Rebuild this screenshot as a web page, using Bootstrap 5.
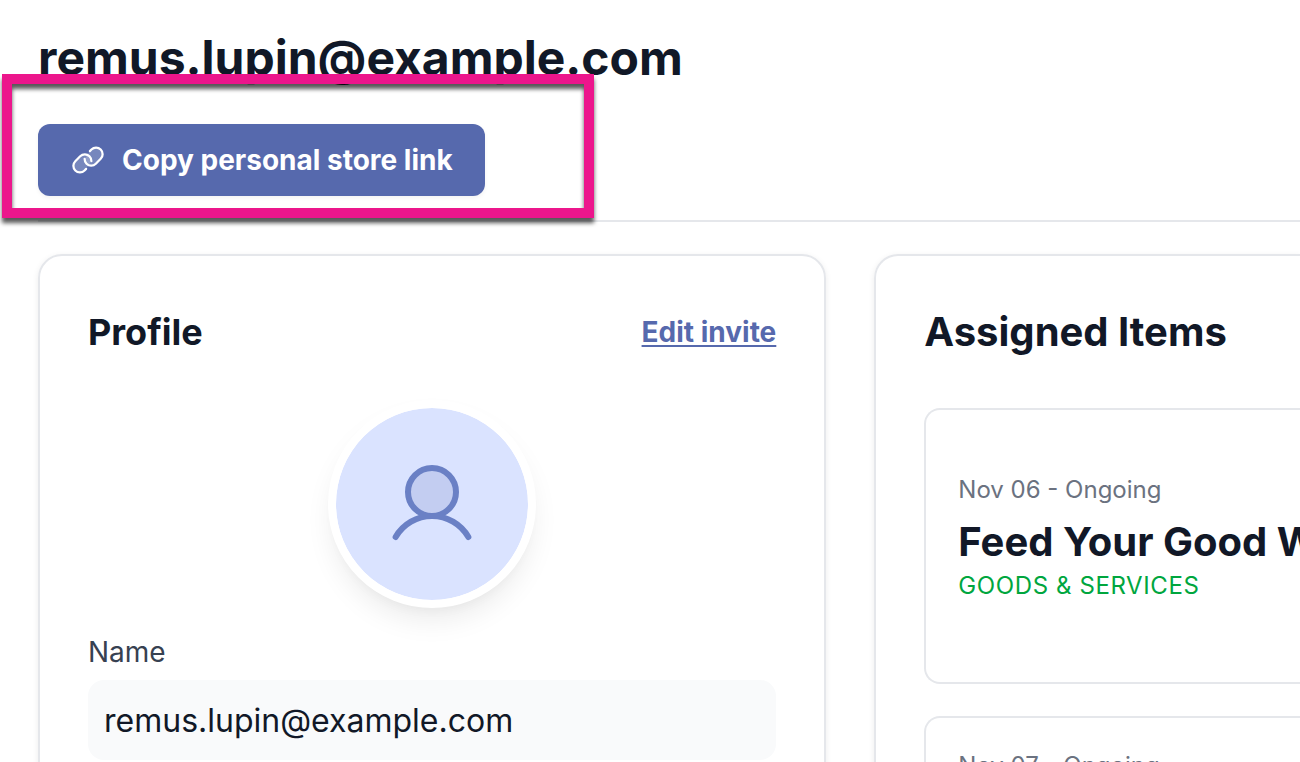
<!DOCTYPE html>
<html lang="en">
<head>
<meta charset="utf-8">
<meta name="viewport" content="width=device-width, initial-scale=1">
<title>remus.lupin@example.com</title>
<link href="https://cdn.jsdelivr.net/npm/bootstrap@5.3.0/dist/css/bootstrap.min.css" rel="stylesheet">
<style>
  :root { --ink: #111827; --brand: #5669ad; --line: #e5e7eb; }
  body { font-family: Inter, "Liberation Sans", sans-serif; color: var(--ink); background: #fff; }
  .page { padding: 28px 0 0 38px; }
  .page-head { padding-bottom: 24px; border-bottom: 2px solid var(--line); margin-bottom: 32px; }
  .page-title { font-size: 48px; line-height: 60px; margin-bottom: 36px; font-weight: 700; }
  .btn-brand {
    --bs-btn-color: #fff; --bs-btn-bg: var(--brand); --bs-btn-border-color: var(--brand);
    --bs-btn-hover-color: #fff; --bs-btn-hover-bg: #4a5b9b; --bs-btn-hover-border-color: #4a5b9b;
    --bs-btn-padding-x: 32px; --bs-btn-padding-y: 16px; --bs-btn-border-width: 0;
    --bs-btn-font-size: 28px; --bs-btn-line-height: 40px; --bs-btn-font-weight: 700; --bs-btn-border-radius: 12px;
    gap: 16px; box-shadow: 0 2px 4px rgba(0,0,0,.05);
  }
  /* callout frame drawn over the header */
  .callout { top: 46px; left: -36px; width: 592px; height: 144px; border: 10px solid #ec168c; filter: drop-shadow(0 5px 2px rgba(0,0,0,.65)); }
  .panels { display: grid; grid-template-columns: calc(65% - 32px) 1fr; gap: 48px; }
  .panel { min-width: 0; padding: 48px; border: 2px solid var(--line); border-radius: 24px; box-shadow: 0 2px 6px rgba(0,0,0,.08); }
  .panel-bleed { padding-right: 0; border-right: 0; border-radius: 24px 0 0 24px; }
  .panel-head { height: 56px; }
  .h-profile { font-size: 36px; line-height: 56px; font-weight: 700; }
  .h-items { font-size: 40px; line-height: 56px; font-weight: 700; }
  .edit-link { font-size: 28px; line-height: 40px; font-weight: 700; color: var(--brand); text-underline-offset: 3px; text-decoration-thickness: 2px; }
  .avatar { width: 208px; height: 208px; margin: 40px auto 24px; border: 8px solid #fff; background: #dae3ff; background-clip: padding-box; box-shadow: 0 16px 28px -4px rgba(0,0,0,.08), 0 8px 12px -6px rgba(0,0,0,.04); }
  .field-label { font-size: 28px; line-height: 40px; margin-bottom: 8px; color: #374151; }
  .field-box { height: 80px; padding: 16px; border: 0; border-radius: 16px; background: #f9fafb; font-size: 32px; line-height: 48px; color: var(--ink); }
  .item-list { margin-top: 48px; gap: 32px; }
  .item-card { padding: 32px; border: 2px solid var(--line); border-right: 0; border-radius: 16px 0 0 16px; white-space: nowrap; overflow: hidden; }
  .item-tall { padding-top: 64px; padding-bottom: 80px; }
  .item-date { font-size: 24px; line-height: 32px; color: #6b7280; margin-bottom: 8px; }
  .item-kind { font-size: 24px; line-height: 32px; color: #00a63e; letter-spacing: .025em; }
</style>
</head>
<body>
<div class="page vh-100 overflow-hidden">
  <header class="page-head position-relative">
    <h1 class="page-title">remus.lupin@example.com</h1>
    <button type="button" class="btn btn-brand d-inline-flex align-items-center">
      <svg width="36" height="36" viewBox="0 0 256 256" fill="currentColor" fill-opacity=".2" stroke="currentColor" stroke-width="16" stroke-linecap="round" stroke-linejoin="round" aria-hidden="true">
        <path d="M141.38,64.68l11-11a46.62,46.62,0,0,1,65.94,0h0a46.62,46.62,0,0,1,0,65.94L193.94,144,183.6,154.34a46.63,46.63,0,0,1-66-.05h0A46.48,46.48,0,0,1,104,120.06"/>
        <path d="M114.62,191.32l-11,11a46.63,46.63,0,0,1-66-.05h0a46.63,46.63,0,0,1,.06-65.89L72.4,101.66a46.62,46.62,0,0,1,65.94,0h0A46.45,46.45,0,0,1,152,135.94"/>
      </svg>
      Copy personal store link
    </button>
    <div class="callout position-absolute pe-none"></div>
  </header>

  <main class="panels">
    <section class="panel">
      <div class="panel-head d-flex align-items-center justify-content-between">
        <h2 class="h-profile mb-0">Profile</h2>
        <a class="edit-link" href="#">Edit invite</a>
      </div>
      <div class="avatar rounded-circle d-flex align-items-center justify-content-center">
        <svg width="96" height="96" viewBox="0 0 256 256" fill="none" stroke="#6a80c5" stroke-width="16" stroke-linecap="round" stroke-linejoin="round" aria-hidden="true">
          <circle cx="128" cy="96" r="64" fill="#c3cdf1"/>
          <path d="M31,216a112,112,0,0,1,194,0"/>
        </svg>
      </div>
      <label class="field-label d-block" for="name">Name</label>
      <input class="field-box form-control" id="name" type="text" value="remus.lupin@example.com" readonly>
    </section>

    <section class="panel panel-bleed">
      <h2 class="h-items mb-0">Assigned Items</h2>
      <div class="item-list d-flex flex-column">
        <article class="item-card item-tall">
          <div class="item-date">Nov 06 - Ongoing</div>
          <h3 class="h-items mb-0">Feed Your Good W</h3>
          <div class="item-kind text-uppercase">Goods &amp; Services</div>
        </article>
        <article class="item-card">
          <div class="item-date">Nov 07 - Ongoing</div>
        </article>
      </div>
    </section>
  </main>
</div>
<script src="https://cdn.jsdelivr.net/npm/bootstrap@5.3.0/dist/js/bootstrap.bundle.min.js"></script>
</body>
</html>
